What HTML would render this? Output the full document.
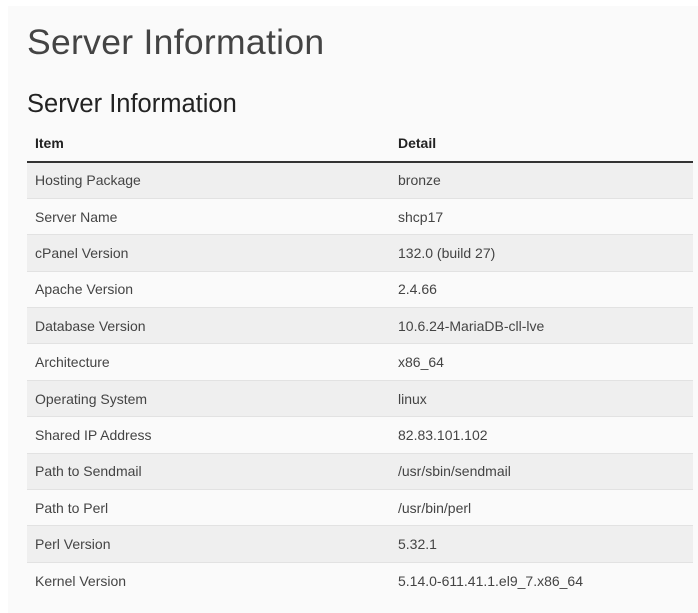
<!DOCTYPE html>
<html><head><style>
html,body{margin:0;padding:0;background:#fff;width:698px;height:613px;overflow:hidden}
body{font-family:"Liberation Sans",sans-serif;color:#333}
.panel{position:absolute;left:8px;top:6px;width:690px;height:607px;background:#fafafa}
h1{position:absolute;left:27px;top:18px;margin:0;font-weight:300;font-size:35.5px;color:#444;letter-spacing:0.3px;line-height:48px}
h2{position:absolute;left:27px;top:88px;margin:0;font-weight:normal;font-size:25.5px;color:#222;line-height:32px}
table{position:absolute;left:27px;top:125px;width:666px;border-collapse:collapse;font-size:14px}
th{text-align:left;font-weight:bold;height:36px;padding:0 0 0 8px;border-bottom:2px solid #333;color:#222}
td{height:36.4px;padding:0 0 0 8px;border-top:1px solid #e2e2e2;color:#444;box-sizing:border-box}
tr:nth-child(even) td{background:#efefef}
td:nth-child(2),th:nth-child(2){padding-left:7px}
</style></head><body>
<div class="panel"></div>
<h1>Server Information</h1>
<h2>Server Information</h2>
<table>
<tr><th style="width:356px">Item</th><th>Detail</th></tr>
<tr><td>Hosting Package</td><td>bronze</td></tr>
<tr><td>Server Name</td><td>shcp17</td></tr>
<tr><td>cPanel Version</td><td>132.0 (build 27)</td></tr>
<tr><td>Apache Version</td><td>2.4.66</td></tr>
<tr><td>Database Version</td><td>10.6.24-MariaDB-cll-lve</td></tr>
<tr><td>Architecture</td><td>x86_64</td></tr>
<tr><td>Operating System</td><td>linux</td></tr>
<tr><td>Shared IP Address</td><td>82.83.101.102</td></tr>
<tr><td>Path to Sendmail</td><td>/usr/sbin/sendmail</td></tr>
<tr><td>Path to Perl</td><td>/usr/bin/perl</td></tr>
<tr><td>Perl Version</td><td>5.32.1</td></tr>
<tr><td>Kernel Version</td><td>5.14.0-611.41.1.el9_7.x86_64</td></tr>
</table>
</body></html>
